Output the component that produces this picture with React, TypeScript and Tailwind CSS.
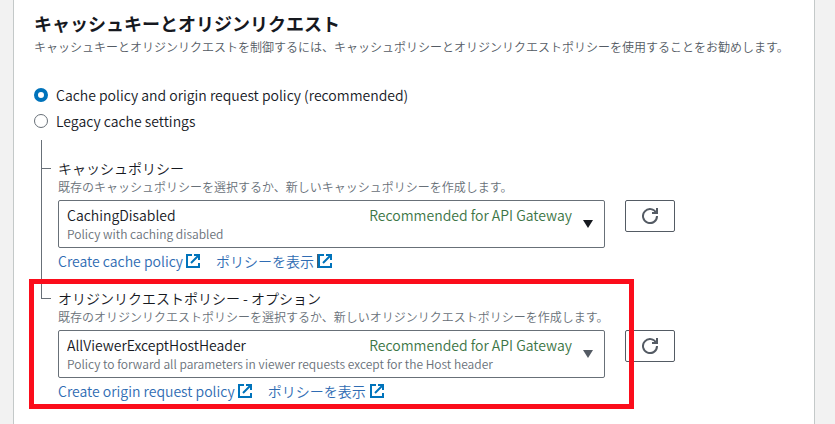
import { useState } from "react";

type Policy = {
  id: string;
  label: string;
  hint: string;
  name: string;
  description: string;
  createText: string;
  arrow: string;
  focused?: boolean;
  highlighted?: boolean;
};

const POLICIES: Policy[] = [
  {
    id: "cache-policy",
    label: "キャッシュポリシー",
    hint: "既存のキャッシュポリシーを選択するか、新しいキャッシュポリシーを作成します。",
    name: "CachingDisabled",
    description: "Policy with caching disabled",
    createText: "Create cache policy",
    arrow: "text-[#16191f]",
    focused: true,
  },
  {
    id: "origin-request-policy",
    label: "オリジンリクエストポリシー - オプション",
    hint: "既存のオリジンリクエストポリシーを選択するか、新しいオリジンリクエストポリシーを作成します。",
    name: "AllViewerExceptHostHeader",
    description: "Policy to forward all parameters in viewer requests except for the Host header",
    createText: "Create origin request policy",
    arrow: "text-[#545b64]",
    highlighted: true,
  },
];

function ExternalIcon() {
  return (
    <svg viewBox="0 0 14 14" className="size-3.5 shrink-0" fill="none" stroke="#0073bb" strokeWidth="2" aria-hidden="true">
      <path d="M6 1H1v12h12V9" />
      <path d="M8 1h5v5M13 1L5 9" />
    </svg>
  );
}

function RefreshIcon() {
  return (
    <svg viewBox="0 0 16 16" className="size-4" fill="none" stroke="#545b64" strokeWidth="2" aria-hidden="true">
      <path d="M15 8a7 7 0 1 1-.7-3" />
      <path d="M15 0v5h-5" />
    </svg>
  );
}

function PolicyField({ policy }: { policy: Policy }) {
  return (
    <div className="grid min-w-0 flex-1 grid-cols-4 gap-5 pt-[19px]">
      <div className="relative col-span-3">
        <label htmlFor={policy.id} className="block text-sm leading-[18px] whitespace-nowrap">
          {policy.label}
        </label>
        <p id={`${policy.id}-hint`} className="text-xs leading-5 whitespace-nowrap text-[#687078]">
          {policy.hint}
        </p>

        {/* Select with the description and badge stacked in the same grid cell */}
        <div className="mt-[3px] grid h-12">
          <select
            id={policy.id}
            aria-describedby={`${policy.id}-hint`}
            className="col-start-1 row-start-1 w-full appearance-none rounded-xs border border-[#687078] bg-white pr-8 pb-[18px] pl-2 text-sm text-[#16191f]"
          >
            <option>{policy.name}</option>
          </select>
          <div className="pointer-events-none col-start-1 row-start-1 flex items-center gap-2.5 pr-[11px] pl-[9px]">
            <div className="flex-1">
              <p className="text-right text-sm leading-5 text-[#3b7545]">Recommended for API Gateway</p>
              <p className="text-xs leading-[18px] text-[#687078]">{policy.description}</p>
            </div>
            <svg viewBox="0 0 12 8" className={`h-2 w-3 fill-current ${policy.arrow}`} aria-hidden="true">
              <path d="M1 0h10L6 8z" />
            </svg>
          </div>
        </div>

        <div className="mt-1 flex gap-4 text-sm leading-[18px] text-[#2f6cb3]">
          <a href="#create" className="flex items-center gap-[3px]">
            {policy.createText}
            <ExternalIcon />
          </a>
          <a href="#view" className="flex items-center">
            ポリシーを表示
            <span className={policy.focused ? "ml-[3px] border-l border-[#545b64]" : "ml-1"}>
              <ExternalIcon />
            </span>
          </a>
        </div>

        {policy.highlighted && (
          <div className="pointer-events-none absolute -inset-x-[29px] -top-2.5 -bottom-[9px] z-10 border-[5px] border-[#fb0d1b]" />
        )}
      </div>

      <div className="pt-[41px]">
        <button
          type="button"
          aria-label="更新"
          className="flex h-8 w-[50px] items-center justify-center rounded-xs border border-[#545b64] bg-white"
        >
          <RefreshIcon />
        </button>
      </div>
    </div>
  );
}

export default function App() {
  const [mode, setMode] = useState("policy");
  const modes = [
    { value: "policy", text: "Cache policy and origin request policy (recommended)" },
    { value: "legacy", text: "Legacy cache settings" },
  ];

  return (
    <div className="min-h-screen bg-[#f2f2f2] pr-5 pl-[13px] font-['Noto_Sans_CJK_JP',sans-serif] font-[350] text-[#16191f]">
      <section className="min-h-screen overflow-hidden border-x border-[#c4c9c9] bg-white px-5 pt-[13px] pb-4">
        <h2 className="text-lg leading-5 font-bold">キャッシュキーとオリジンリクエスト</h2>
        <p className="mt-1 text-xs leading-5 whitespace-nowrap text-[#545b64]">
          キャッシュキーとオリジンリクエストを制御するには、キャッシュポリシーとオリジンリクエストポリシーを使用することをお勧めします。
        </p>

        <div role="radiogroup" className="mt-7 flex flex-col gap-1.5">
          {modes.map((m) => (
            <label key={m.value} className="flex items-center gap-2 text-sm leading-5">
              <input
                type="radio"
                name="mode"
                value={m.value}
                checked={mode === m.value}
                onChange={() => setMode(m.value)}
                className="size-3.5 appearance-none rounded-full border border-[#687078] bg-white checked:border-4 checked:border-[#0073bb]"
              />
              {m.text}
            </label>
          ))}
        </div>

        {/* Tree lines join the fields to the selected mode */}
        <ul className="mt-[9px] ml-[7px]">
          {POLICIES.map((policy, i) => (
            <li key={policy.id} className="flex">
              <div className="flex w-[17px] shrink-0 flex-col">
                <div className="h-[29px] w-2.5 border-b border-l border-[#687078]" />
                {i < POLICIES.length - 1 && <div className="flex-1 border-l border-[#687078]" />}
              </div>
              <PolicyField policy={policy} />
            </li>
          ))}
        </ul>
      </section>
    </div>
  );
}
